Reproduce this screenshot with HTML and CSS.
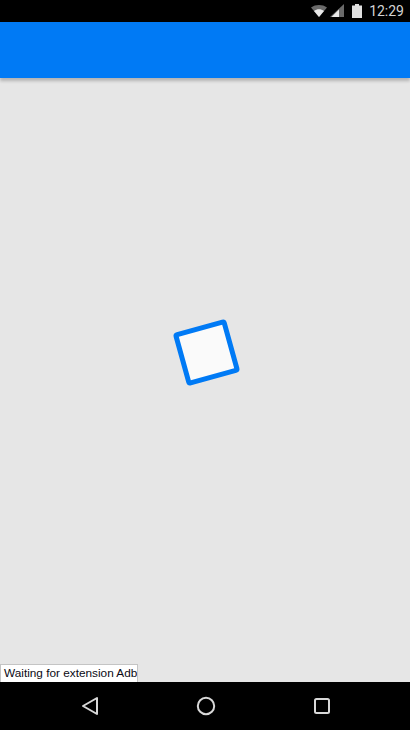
FILE: index.html
```html
<!DOCTYPE html>
<html lang="en">
<head>
<meta charset="utf-8">
<title>Loading</title>
<link rel="stylesheet" href="styles.css">
</head>
<body>
<div class="screen">
  <div class="status-bar">
    <svg class="icon-wifi" width="16" height="12" viewBox="0 0 16 12">
      <path d="M0 2.500C4.500-.8 11.500-.8 16 2.500L8 12Z" fill="#6a6a6a"/>
      <path d="M3 6C6 3.800 10 3.800 13 6L8 12Z" fill="#e8e8e8"/>
    </svg>
    <svg class="icon-signal" width="14" height="13" viewBox="0 0 14 13">
      <path d="M14 0V13H0Z" fill="#6a6a6a"/>
      <path d="M9 5.500V13H1.500Z" fill="#e8e8e8"/>
    </svg>
    <svg class="icon-battery" width="10" height="14" viewBox="0 0 10 14">
      <path d="M3 0H7V1.500H10V14H0V1.500H3Z" fill="#e0e0e0"/>
    </svg>
    <span class="clock">12:29</span>
  </div>
  <header class="app-bar"></header>
  <main class="content">
    <div class="spinner"></div>
    <div class="debug-note"><span>Waiting for extension Adb</span></div>
  </main>
  <nav class="nav-bar">
    <svg width="18" height="20" viewBox="0 0 18 20">
      <path d="M16 2V18L2 10Z" fill="none" stroke="#d8d8d8" stroke-width="2" stroke-linejoin="round"/>
    </svg>
    <svg width="20" height="20" viewBox="0 0 20 20">
      <circle cx="10" cy="10" r="8.200" fill="none" stroke="#d8d8d8" stroke-width="2"/>
    </svg>
    <svg width="18" height="18" viewBox="0 0 18 18">
      <rect x="2" y="2" width="14" height="14" rx="1.500" fill="none" stroke="#d8d8d8" stroke-width="2"/>
    </svg>
  </nav>
</div>
</body>
</html>
```
FILE: styles.css
```css
* {
  box-sizing: border-box;
}

html,
body {
  margin: 0;
  height: 100%;
}

.screen {
  display: flex;
  flex-direction: column;
  height: 730px;
  overflow: hidden;
  background: #e6e6e6;
  font-family: "Liberation Sans", Arial, sans-serif;
}

.status-bar {
  display: flex;
  align-items: center;
  justify-content: flex-end;
  flex: none;
  height: 22px;
  padding: 0 6px 1px 0;
  background: #000;
}

.icon-wifi {
  margin-right: 3px;
}

.icon-signal {
  margin-right: 8px;
}

.icon-battery {
  margin-right: 7px;
}

.clock {
  font-family: Roboto, sans-serif;
  font-size: 14px;
  line-height: 20px;
  color: #d4d4d4;
}

.app-bar {
  position: relative;
  z-index: 1;
  flex: none;
  height: 56px;
  background: #007af5;
  box-shadow: 0 3px 3px rgba(0, 0, 0, 0.22);
}

.content {
  position: relative;
  display: flex;
  flex: 1;
  align-items: center;
  justify-content: center;
  padding: 0 0 56px 2px;
}

.spinner {
  width: 55px;
  height: 55px;
  border: 5px solid #007af5;
  border-radius: 4px;
  background: #fafafa;
  transform: rotate(-15.500deg);
}

.debug-note {
  position: absolute;
  left: 0;
  bottom: 0;
  width: 138px;
  height: 18px;
  padding: 0 0 0 3px;
  overflow: hidden;
  border: 1px solid #c4c4c4;
  border-bottom: 0;
  background: #fff;
  color: #0a0a14;
  font-size: 11.800px;
  line-height: 17px;
  white-space: nowrap;
}

.nav-bar {
  display: flex;
  flex: none;
  align-items: center;
  gap: 97px;
  height: 48px;
  padding-left: 81px;
  background: #000;
}
```
